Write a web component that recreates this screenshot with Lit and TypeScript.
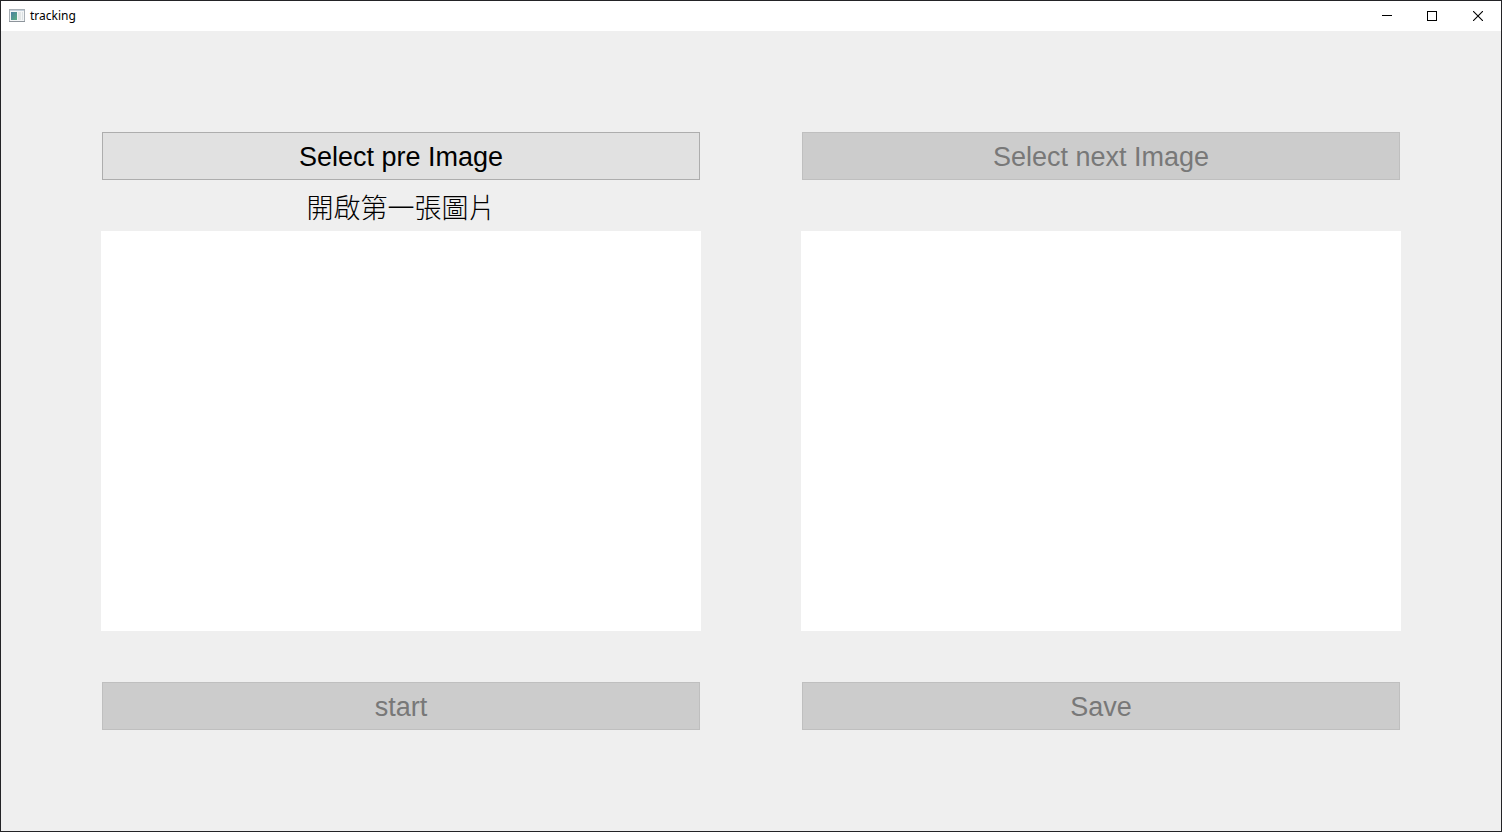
import { LitElement, css, html, nothing } from "lit";
import { customElement, property } from "lit/decorators.js";

@customElement("title-bar")
class TitleBar extends LitElement {
  @property() caption = "";

  static styles = css`
    :host {
      display: flex;
      align-items: center;
      height: 30px;
      padding-left: 8px;
      background: #fff;
      color: #000;
      font: 12px/16px "Noto Sans", "Open Sans", sans-serif;
    }
    svg {
      display: block;
    }
    .caption {
      flex: 1;
      padding-left: 5px;
    }
    .control {
      display: grid;
      place-items: center;
      width: 46px;
      height: 30px;
      padding: 0;
      border: 0;
      background: none;
    }
    .control:hover {
      background: #e5e5e5;
    }
  `;

  render() {
    return html`
      <svg width="16" height="16" viewBox="0 0 16 16" aria-hidden="true">
        <defs>
          <linearGradient id="pane" x1="0" y1="0" x2="1" y2="1">
            <stop offset="0" stop-color="#4a7fa0" />
            <stop offset="1" stop-color="#5aae82" />
          </linearGradient>
        </defs>
        <rect x="0.5" y="1.5" width="15" height="12" fill="#f4f6f7" stroke="#a9b0b6" />
        <rect x="1" y="2" width="14" height="1" fill="#c3cfda" />
        <rect x="2" y="4" width="6" height="8" fill="url(#pane)" />
        <rect x="9" y="4" width="3" height="8" fill="#e2e6e6" />
        <rect x="13" y="4" width="1" height="8" fill="#dbe1e3" />
        <rect x="0" y="13" width="16" height="1" fill="#8d949b" />
      </svg>
      <span class="caption">${this.caption}</span>
      <button class="control" type="button" aria-label="Minimize">
        <svg width="12" height="10" viewBox="0 0 12 10"><path d="M2 4.5H12" stroke="#000" /></svg>
      </button>
      <button class="control" type="button" aria-label="Maximize">
        <svg width="10" height="10" viewBox="0 0 10 10">
          <rect x="0.5" y="0.5" width="9" height="9" fill="none" stroke="#000" />
        </svg>
      </button>
      <button class="control" type="button" aria-label="Close">
        <svg width="10" height="10" viewBox="0 0 10 10">
          <path d="M0 0L10 10M10 0L0 10" fill="none" stroke="#000" stroke-width="1.1" />
        </svg>
      </button>
    `;
  }
}

@customElement("image-panel")
class ImagePanel extends LitElement {
  @property() select = "";
  @property({ type: Boolean }) ready = false;
  @property() hint = "";
  @property() action = "";

  static styles = css`
    :host {
      display: flex;
      flex-direction: column;
      color: #000;
      font: 27px/32px "Liberation Sans", "Noto Sans CJK TC", sans-serif;
    }
    .push {
      height: 48px;
      margin: 1px;
      padding: 2px 0 0;
      border: 1px solid #adadad;
      background: #e1e1e1;
      color: #000;
      font: inherit;
    }
    .push:disabled {
      border-color: #bfbfbf;
      background: #ccc;
      color: #787878;
    }
    .hint {
      box-sizing: border-box;
      height: 50px;
      padding-top: 2px;
      font-family: "Noto Sans CJK TC", sans-serif;
      font-weight: 300;
      line-height: 48px;
      text-align: center;
    }
    .view {
      flex: 1;
      min-height: 200px;
      margin-bottom: 50px;
      background: #fff;
    }
  `;

  render() {
    return html`
      <button class="push" type="button" ?disabled=${!this.ready}>${this.select}</button>
      <div class="hint">${this.hint || nothing}</div>
      <div class="view"></div>
      <button class="push" type="button" disabled>${this.action}</button>
    `;
  }
}

@customElement("app-root")
class AppRoot extends LitElement {
  static styles = css`
    :host {
      display: flex;
      flex-direction: column;
      box-sizing: border-box;
      min-height: 100vh;
      border: 1px solid #232326;
      background: #efefef;
    }
    .panels {
      flex: 1;
      display: grid;
      grid-template-columns: 1fr 1fr;
      gap: 100px;
      padding: 100px;
    }
  `;

  render() {
    return html`
      <title-bar caption="tracking"></title-bar>
      <main class="panels">
        <image-panel select="Select pre Image" ready hint="開啟第一張圖片" action="start"></image-panel>
        <image-panel select="Select next Image" action="Save"></image-panel>
      </main>
    `;
  }
}
